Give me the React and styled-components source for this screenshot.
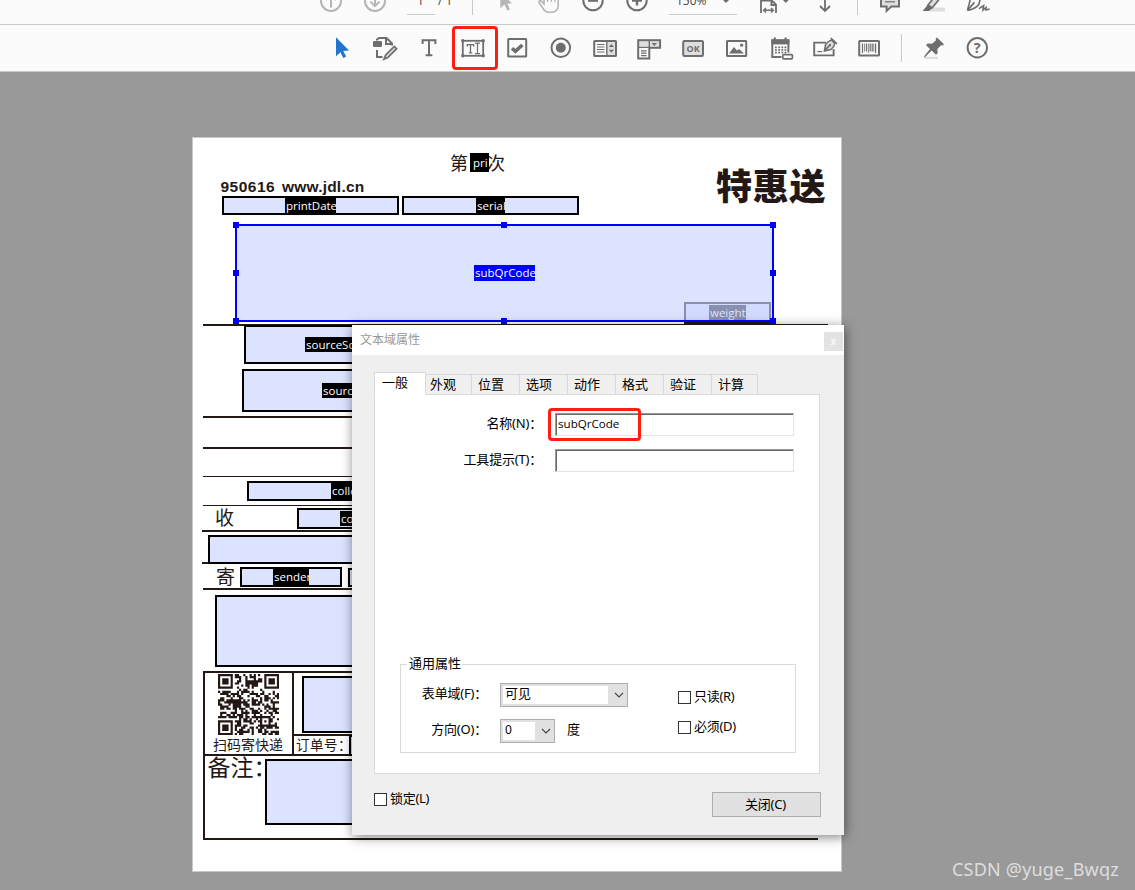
import React from 'react';
import styled, { createGlobalStyle, css } from 'styled-components';

const INK = '#6e6e6e';
const FAINT = '#b5b5b5';
const RED = '#ff1f10';
const RULE = '#231815';
const UI = "'Noto Sans', 'Noto Sans CJK SC', sans-serif";
const CJK = "'Noto Sans CJK SC', sans-serif";

const Global = createGlobalStyle`
  * { box-sizing: border-box; }
  body { margin: 0; background: #999; font-family: ${UI}; }
`;

const Window = styled.div`
  width: 1135px;
  height: 890px;
  display: flex;
  flex-direction: column;
  overflow: hidden;
  background: #999;
`;

/* ---------- toolbars ---------- */

const Bar = styled.div`
  display: flex;
  flex: none;
  background: #fbfbfb;
  border-bottom: 1px solid #c9c9c9;
`;

const NavBar = styled(Bar)`
  height: 25px;
  padding-left: 309px;
  overflow: hidden;
`;

const ToolBar = styled(Bar)`
  height: 47px;
  padding-left: 319px;
`;

const NavIcon = styled.svg`
  width: 44px;
  height: 24px;
  flex: none;
  display: block;
  margin-left: ${(p) => p.$gap || 0}px;
  fill: none;
  stroke: ${(p) => (p.$faint ? FAINT : INK)};
  stroke-width: 2;
`;

const NavBox = styled.div`
  width: ${(p) => p.$w}px;
  height: 15px;
  flex: none;
  margin-left: ${(p) => p.$gap || 0}px;
  padding-left: ${(p) => p.$pad}px;
  border-bottom: 1px solid ${(p) => (p.$plain ? 'transparent' : '#c9c9c9')};
  font-family: 'Open Sans', sans-serif;
  font-size: 12px;
  line-height: 2px;
  color: #444;
  display: flex;
  white-space: pre;
`;

const Caret = styled.svg`
  width: 8px;
  height: 6px;
  margin-left: ${(p) => p.$gap}px;
  margin-top: -1px;
  fill: ${INK};
`;

const NavRule = styled.span`
  width: 1px;
  height: 15px;
  flex: none;
  margin: 0 10px 0 ${(p) => p.$gap}px;
  background: #c9c9c9;
`;

const Tool = styled.div`
  position: relative;
  width: 44px;
  height: 46px;
  flex: none;
  display: flex;
  justify-content: center;
  padding-top: 7px;
`;

const ToolSvg = styled.svg`
  width: 32px;
  height: 32px;
  fill: none;
  stroke: ${INK};
  stroke-width: 2;
`;

const ToolMark = styled.span`
  position: absolute;
  left: 1px;
  top: 1px;
  width: 46px;
  height: 44px;
  border: 3px solid ${RED};
  border-radius: 4px;
`;

const ToolRule = styled.span`
  width: 1px;
  height: 28px;
  margin: 9px 9px 0 10px;
  background: #c9c9c9;
`;

const S = { fill: INK, stroke: 'none' };

const tools = [
  ['select', <path d="M11 5.2V24.2L15.4 20.2L18.3 26L21.2 24.6L18.2 19L24 18.6Z" fill="#2076cd" stroke="none" />],
  ['edit', <>
    <rect x="4" y="9" width="9" height="6" rx="1" {...S} />
    <path d="M8 8.5V7.5L10 6H17.5L23 11.5V13.5M17 6V12H23M8 18V25H13.5" />
    <path d="M16.6 23.2L25.3 14.4L27.6 16.7L18.8 25.5L15 27.2Z" strokeWidth="1.7" fill="#ddd" />
  </>],
  ['text', <path d="M9.6 12V8.2H22.4V12M16 8.2V23.3M12.6 23.3H19.4" strokeWidth="2" />],
  ['field', <>
    <rect x="5.8" y="8.8" width="20.4" height="15" strokeWidth="1.8" />
    <path d="M10.3 14.4V12.6H16.7V14.4M13.5 12.6V20.8M11.8 20.8H15.2" strokeWidth="1.3" />
    <path d="M18 11.2H23M20.5 11.2V21.6M18 21.6H23" strokeWidth="1.2" />
    {[[5.8, 8.8], [26.2, 8.8], [5.8, 23.8], [26.2, 23.8]].map(([x, y]) => <circle key={x + '-' + y} cx={x} cy={y} r="1.7" {...S} />)}
  </>],
  ['check', <>
    <rect x="7.2" y="7" width="18" height="17.6" rx=".6" />
    <path d="M11 16.2L14.4 19.4L21.3 13" strokeWidth="3.6" />
  </>],
  ['radio', <><circle cx="15.8" cy="15.8" r="9.3" /><circle cx="15.8" cy="15.8" r="5" {...S} /></>],
  ['list', <>
    <path d="M18 9H27V24H18Z" fill="#dedede" stroke="none" />
    <rect x="5.2" y="9" width="21.8" height="15" rx=".6" />
    <path d="M17.8 9V24" strokeWidth="1.4" />
    <path d="M8 12.5H15.5M8 15H15.5M8 17.5H15.5M8 20H15.5" strokeWidth="1.2" />
    <path d="M19.8 15L22.4 12L25 15ZM19.8 17.8H25L22.4 20.8Z" {...S} />
  </>],
  ['combo', <>
    <rect x="5.2" y="8.2" width="21.9" height="7.6" fill="#dedede" />
    <path d="M16.3 8V16" strokeWidth="1.4" />
    <path d="M18.6 11H24L21.3 14Z" {...S} />
    <path d="M5.2 16V26.5H16.3V16" fill="#fbfbfb" />
    <path d="M8 18.8H13.5M8 21.2H13.5M8 23.6H13.5" strokeWidth="1.2" />
  </>],
  ['button', <>
    <rect x="6.2" y="9" width="19.8" height="15" rx="1.2" fill="#dedede" />
    <text x="16.1" y="20" textAnchor="middle" fontFamily="'Open Sans', sans-serif" fontWeight="700" fontSize="9" {...S}>OK</text>
  </>],
  ['image', <>
    <rect x="6" y="9" width="19.2" height="15" rx=".6" />
    <path d="M8 21.6L13 15L16 18.4L18 17L23 21.6Z" {...S} />
    <circle cx="20.6" cy="13.2" r="1.6" {...S} />
  </>],
  ['date', <>
    <path d="M6.3 7.3H24.4V12.4H6.3Z" {...S} />
    <path d="M9.8 5.4V8M20.6 5.4V8" strokeWidth="2.2" />
    <path d="M16.5 25H7.3V8.5H23.4V20.5" />
    {[15.4, 18, 20.6].map((y) => [10.9, 14.1, 17.3, 20.4].map((x) => <rect key={x + '-' + y} x={x - 0.9} y={y - 0.9} width="1.8" height="1.7" {...S} />))}
    <rect x="17.8" y="22.6" width="9.6" height="4.2" rx="1" fill="#fbfbfb" strokeWidth="1.7" />
  </>],
  ['sign', <>
    <path d="M17 10.6H5.2V23.4H24.6V17" strokeWidth="1.9" />
    <path d="M8.3 19.6H13" strokeWidth="1.2" />
    <path d="M15.4 18.9L16.6 12.6Q18.6 9.2 22.4 8L25.8 11.4Q25 15.4 21.8 17.6Z" fill="#dedede" strokeWidth="1.6" />
    <path d="M15.4 18.9L21 13M21.8 6L28 11.8" strokeWidth="1.7" />
    <circle cx="21" cy="13" r="1.2" {...S} />
  </>],
  ['barcode', <>
    <rect x="6.2" y="9" width="19.8" height="14.6" rx=".6" />
    <path d="M9.5 11.6V21M13.5 11.6V19.5M17.2 11.6V19.5M19.2 11.6V19.5M22.6 11.6V21" strokeWidth="1.2" />
    <path d="M11.6 11.6V19.5M15.4 11.6V21M20.8 11.6V19.5" strokeWidth=".8" />
  </>],
];

const helpers = [
  ['pin', <>
    <path d="M7 24.8H21V27H7Z" fill="#dedede" stroke="none" />
    <path d="M20 5.4L27 12.2L25.6 13.6L24 13.2L20.4 17L20.6 21.2L19 22.8L14.6 18.6L8 25.2L7 24.6L13 17L9 13.2L10.6 11.6L15 11.8L19 8.2L18.6 6.8Z" {...S} />
  </>],
  ['help', <>
    <circle cx="16.3" cy="15.8" r="9.7" />
    <text x="16.3" y="21" textAnchor="middle" fontFamily="'Open Sans', sans-serif" fontWeight="700" fontSize="14.5" {...S}>?</text>
  </>],
];

function Navigation() {
  return (
    <NavBar>
      <NavIcon $faint><circle cx="22" cy="1" r="10" /><path d="M22 -5V7.5M17 0L22 -5L27 0" /></NavIcon>
      <NavIcon $faint><circle cx="22" cy="1" r="10" /><path d="M22 -5V6M17.4 1.6L22 6.2L26.6 1.6" /></NavIcon>
      <NavBox $w={28} $gap={10} $pad={10}>1</NavBox>
      <NavBox $w={21} $pad={3} $plain>/ 1</NavBox>
      <NavRule $gap={16} />
      <NavIcon $faint><path d="M17.3 -9V8.3L21.4 4.6L24.4 10.6L27 9.4L24.4 3.6H29Z" fill={FAINT} stroke="none" /></NavIcon>
      <NavIcon $faint><path d="M17 -6V4L14.2 1C12.5 0 11.4 1.4 12.4 3L17.4 10.4Q19 12.2 21.5 12.2H25Q30.6 12 31.2 6V-3" strokeWidth="1.6" /><path d="M20.6 -4V2M24.4 -4V2M28 -4V2" strokeWidth="1.3" /></NavIcon>
      <NavIcon><circle cx="22" cy=".6" r="9.7" /><path d="M17 .6H27" strokeWidth="2.4" /></NavIcon>
      <NavIcon><circle cx="22" cy=".6" r="9.7" /><path d="M17 .6H27M22 -5V5.6" strokeWidth="2.4" /></NavIcon>
      <NavBox $w={68} $gap={10} $pad={7}>150%<Caret $gap={15}><path d="M0 0H8L4 4Z" /></Caret></NavBox>
      <NavIcon $gap={9}>
        <path d="M15 13V-4M30 13V4.6L26 .6H15M25.4 -2V5H30" strokeWidth="1.8" />
        <path d="M17.6 10.3H27.4M20 8L17.6 10.3L20 12.6M25 8L27.4 10.3L25 12.6" strokeWidth="1.4" />
        <path d="M36 -1H43.6L39.8 3Z" fill={INK} stroke="none" />
      </NavIcon>
      <NavIcon $gap={13}><path d="M22 0V11M17 6L22 11L27 6" strokeWidth="1.8" /></NavIcon>
      <NavRule $gap={10} />
      <NavIcon><path d="M13 -4V6.4H18.6V11L23.4 6.4H31V-4Z" fill="#dedede" /><path d="M17 1.8H27" strokeWidth="1.2" /></NavIcon>
      <NavIcon><path d="M18 11.5L22 7.4H33V11.5Z" fill="#dedede" stroke="none" /><path d="M29 -3L20 8L16 5L24 -5" fill="#dedede" strokeWidth="1.7" /><path d="M10.6 11L16 4.6L20 8.4L17.4 11Z" fill={INK} stroke="none" /></NavIcon>
      <NavIcon><path d="M11.4 10.4L15 -3M11.4 10.4Q20 9 23 4L24.6 -3M11.4 10.4L18.4 2.4" strokeWidth="1.6" /><path d="M23 8.6L27.6 5.6L27 10L30 7.4V10L33.6 9" strokeWidth="1.6" /></NavIcon>
    </NavBar>
  );
}

function Tools() {
  return (
    <ToolBar>
      {tools.map(([name, art]) => (
        <Tool key={name}>
          <ToolSvg viewBox="0 0 32 32">{art}</ToolSvg>
          {name === 'field' && <ToolMark />}
        </Tool>
      ))}
      <ToolRule />
      {helpers.map(([name, art]) => (
        <Tool key={name}><ToolSvg viewBox="0 0 32 32">{art}</ToolSvg></Tool>
      ))}
    </ToolBar>
  );
}

/* ---------- form sheet: a free canvas of placed fields ---------- */

const Stage = styled.main`
  position: relative;
  flex: 1;
  padding: 65px 0 0 192px;
`;

const Sheet = styled.div`
  position: relative;
  width: 650px;
  height: 735px;
  background: #fff;
  border: 1px solid #c8c8c8;
`;

/* Canvas coordinates are measured from the window; the sheet starts at 193, 138. */
const placed = css`
  position: absolute;
  left: ${(p) => p.$x - 193}px;
  top: ${(p) => p.$y - 138}px;
`;

const Line = styled.span`
  ${placed}
  width: ${(p) => p.$w}px;
  height: ${(p) => p.$h}px;
  background: ${(p) => (p.$active ? '#0000ff' : RULE)};
`;

const Print = styled.span`
  ${placed}
  font-family: ${(p) => p.$font || CJK};
  font-size: ${(p) => p.$size}px;
  font-weight: ${(p) => p.$weight || 400};
  letter-spacing: ${(p) => p.$track || 0}px;
  line-height: 1;
  color: ${RULE};
  white-space: nowrap;
`;

const Box = styled.div`
  ${placed}
  width: ${(p) => p.$w}px;
  height: ${(p) => p.$h}px;
  background: ${(p) => (p.$muted ? '#d3daff' : '#dce3ff')};
  border: 2px solid ${(p) => (p.$active ? '#0000ff' : p.$muted ? '#8890ae' : '#000')};
`;

const Tag = styled.span`
  ${placed}
  width: ${(p) => p.$w}px;
  height: ${(p) => p.$h}px;
  padding-left: ${(p) => p.$pad || 1}px;
  overflow: hidden;
  background: ${(p) => (p.$active ? '#0000ff' : p.$muted ? '#8890ae' : '#000')};
  color: ${(p) => (p.$muted ? '#dce3ff' : '#fff')};
  font-family: 'Open Sans', sans-serif;
  font-size: 11.5px;
  line-height: ${(p) => p.$lh || p.$h}px;
  white-space: nowrap;
`;

const Handle = styled.i`
  ${placed}
  width: 6px;
  height: 6px;
  background: #0000ff;
`;

const Code = styled.svg`
  ${placed}
  width: 61px;
  height: 61px;
`;

const lines = [
  [203, 324, 625, 2], [203, 416, 620, 2], [203, 447, 620, 2], [203, 476, 620, 1], [203, 505, 620, 1],
  [202, 530, 620, 2], [202, 562, 620, 2], [203, 588, 620, 2], [203, 671, 615, 2], [292, 734, 520, 2],
  [203, 754, 615, 2], [203, 838, 615, 2], [203, 671, 2, 169], [292, 671, 2, 85],
];

const boxes = [
  [222, 196, 177, 19], [402, 196, 177, 19], [244, 325, 200, 39], [242, 369, 200, 43], [247, 481, 200, 20],
  [297, 508, 200, 21], [208, 535, 300, 29], [240, 567, 102, 20], [348, 568, 100, 19], [215, 595, 300, 72],
  [302, 676, 200, 57], [349, 735, 120, 21], [265, 759, 300, 66],
];

const tags = [
  ['pri', 470, 153, 19, 19, 19, 3], ['printDate', 285, 197, 51, 16, 17], ['serial', 476, 197, 29, 16, 17],
  ['sourceSc', 305, 337, 60, 15], ['sourceC', 322, 383, 50, 15], ['colle', 331, 482, 40, 18],
  ['con', 340, 511, 40, 15], ['sender', 273, 568, 36, 17, 18],
];

const handles = [[233, 222], [501, 222], [770, 222], [233, 270], [770, 270], [233, 318], [501, 318], [770, 318]];

const inFinder = (x, y) => (x < 8 && y < 8) || (x > 20 && y < 8) || (x < 8 && y > 20);
const ring = (x, y, cx, cy, r) => {
  const d = Math.max(Math.abs(x - cx), Math.abs(y - cy));
  return r === 3 ? d === 3 || d < 2 : d === 2 || d === 0;
};
const moduleOn = (x, y) => {
  if (inFinder(x, y)) return ring(x, y, x > 14 ? 25 : 3, y > 14 ? 25 : 3, 3) && x !== 7 && y !== 7 && x !== 21 && y !== 21;
  if (Math.abs(x - 22) < 3 && Math.abs(y - 22) < 3) return ring(x, y, 22, 22, 2);
  const n = Math.sin(x * 12.9898 + y * 78.233) * 43758.5453;
  return n - Math.floor(n) < 0.55;
};
const qr = Array.from({ length: 29 * 29 }, (_, i) => [i % 29, Math.floor(i / 29)])
  .filter(([x, y]) => moduleOn(x, y))
  .map(([x, y]) => `M${x} ${y}h1.04v1.04h-1.04z`)
  .join('');

function FormSheet() {
  return (
    <Sheet>
      {lines.map(([x, y, w, h]) => <Line key={`${x}-${y}-${w}`} $x={x} $y={y} $w={w} $h={h} />)}
      <Print $x={450} $y={153} $size={18}>第</Print>
      <Print $x={487} $y={153} $size={18}>次</Print>
      <Print $x={220.5} $y={178.5} $size={15.5} $weight={700} $track={0.5} $font="'Liberation Sans', sans-serif">950616</Print>
      <Print $x={282} $y={178.5} $size={15.5} $weight={700} $track={0.2} $font="'Liberation Sans', sans-serif">www.jdl.cn</Print>
      <Print $x={716} $y={166} $size={36} $weight={900} $track={0.8}>特惠送</Print>
      <Print $x={215} $y={507} $size={19}>收</Print>
      <Print $x={216} $y={566} $size={19}>寄</Print>
      <Print $x={213} $y={737} $size={14}>扫码寄快递</Print>
      <Print $x={296} $y={738} $size={13.5} $track={0.5}>订单号：</Print>
      <Print $x={207.5} $y={755} $size={23}>备注：</Print>
      <Code $x={218} $y={674} viewBox="0 0 29 29"><path d={qr} fill={RULE} /></Code>
      {boxes.map(([x, y, w, h]) => <Box key={`${x}-${y}`} $x={x} $y={y} $w={w} $h={h} />)}
      {tags.map(([t, x, y, w, h, lh, pad]) => <Tag key={t} $x={x} $y={y} $w={w} $h={h} $lh={lh} $pad={pad}>{t}</Tag>)}
      <Line $x={684} $y={322} $w={87} $h={2} />
      <Box $x={235} $y={224} $w={539} $h={98} $active />
      <Box $x={684} $y={302} $w={87} $h={20} $muted />
      <Tag $x={709} $y={305} $w={37} $h={15} $muted>weight</Tag>
      <Line $x={235} $y={320} $w={539} $h={2} $active />
      <Tag $x={474} $y={265} $w={61} $h={16} $active>subQrCode</Tag>
      {handles.map(([x, y]) => <Handle key={`${x}-${y}`} $x={x} $y={y} />)}
    </Sheet>
  );
}

/* ---------- properties dialog ---------- */

const Dialog = styled.section`
  position: absolute;
  left: 352px;
  top: 253px;
  width: 492px;
  height: 510px;
  background: #efefef;
  box-shadow: 1px 2px 11px rgba(0, 0, 0, 0.5);
  font-size: 13px;
  color: #000;
`;

const TitleBar = styled.header`
  height: 30px;
  padding: 0 1px 0 8px;
  display: flex;
  justify-content: space-between;
  background: #fff;
  font-size: 12px;
  line-height: 29px;
  color: #999;
`;

const Close = styled.span`
  width: 19px;
  height: 19px;
  margin-top: 7px;
  background: #e3e3e3;
  color: #f6f6f6;
  font-size: 10px;
  font-weight: 700;
  line-height: 18px;
  text-align: center;
`;

const Body = styled.div`
  padding: 17px 24px 0 22px;
`;

const Tabs = styled.div`
  display: flex;
  align-items: flex-end;
  height: 23px;
`;

const Tab = styled.div`
  position: relative;
  width: ${(p) => p.$w}px;
  height: ${(p) => (p.$on ? 23 : 21)}px;
  padding-left: ${(p) => (p.$on ? 7 : p.$pad)}px;
  line-height: ${(p) => (p.$on ? 18 : 18)}px;
  background: ${(p) => (p.$on ? '#fff' : '#f0f0f0')};
  border: 1px solid #d9d9d9;
  border-bottom-color: ${(p) => (p.$on ? '#fff' : '#d9d9d9')};
  border-left-width: ${(p) => (p.$on ? 1 : 0)}px;
  z-index: 1;
`;

const Panel = styled.div`
  height: 380px;
  margin-top: -1px;
  padding-top: 18px;
  background: #fff;
  border: 1px solid #d9d9d9;
`;

const FormRow = styled.div`
  display: flex;
  height: ${(p) => p.$h}px;
  margin-bottom: ${(p) => p.$after}px;
`;

const Label = styled.label`
  width: ${(p) => p.$w}px;
  margin-right: ${(p) => p.$gap}px;
  text-align: right;
  line-height: 21px;
  letter-spacing: -0.2px;
  white-space: nowrap;
`;

const Entry = styled.div`
  position: relative;
  width: 239px;
  height: 23px;
  padding-left: 2px;
  border: 1px solid #e3e3e3;
  border-top-color: #999;
  border-left-color: #999;
  box-shadow: inset 1px 1px 0 #696969;
  font-family: 'Open Sans', sans-serif;
  font-size: 11.6px;
  line-height: 20px;
`;

const EntryMark = styled.span`
  position: absolute;
  left: -8px;
  top: -6px;
  width: 93px;
  height: 33px;
  border: 3px solid ${RED};
  border-radius: 4px;
`;

const Group = styled.div`
  width: 396px;
  height: 89px;
  margin: 192px 0 0 25px;
  border: 1px solid #d9d9d9;
`;

const Legend = styled.div`
  width: 55px;
  height: 16px;
  margin: -9px 0 0 6px;
  padding-left: 2px;
  background: #fff;
  line-height: 15px;
  white-space: nowrap;
`;

const Columns = styled.div`
  display: flex;
  padding-top: 11px;
`;

const Column = styled.div`
  width: ${(p) => p.$w}px;
  padding-top: ${(p) => p.$top || 0}px;
`;

const Select = styled.div`
  width: ${(p) => p.$w}px;
  height: 24px;
  padding: 2px;
  display: flex;
  justify-content: space-between;
  align-items: center;
  background: #e1e1e1;
  border: 1px solid #adadad;

  span {
    width: ${(p) => p.$w - 23}px;
    height: 18px;
    padding-left: 2px;
    background: #fff;
    line-height: 15px;
    font-size: ${(p) => p.$size || 13}px;
  }

  svg {
    width: 10px;
    height: 6px;
    margin-right: 1px;
  }
`;

const Unit = styled.span`
  margin-left: 12px;
  line-height: 21px;
`;

const Check = styled.div`
  display: flex;
  gap: 3px;
  height: 13px;
  margin: ${(p) => p.$margin || 0};
  letter-spacing: -0.3px;
  line-height: 11px;
  white-space: nowrap;

  i {
    width: 13px;
    height: 13px;
    background: #fff;
    border: 1px solid #333;
  }
`;

const Footer = styled.footer`
  display: flex;
  justify-content: space-between;
  align-items: flex-start;
  padding-top: 18px;
  margin-right: -1px;
`;

const Button = styled.div`
  width: 109px;
  height: 25px;
  padding-right: 2px;
  background: #e1e1e1;
  border: 1px solid #adadad;
  line-height: 22px;
  text-align: center;
  letter-spacing: -0.2px;
`;

const tabs = [['外观', 46, 4], ['位置', 48, 6], ['选项', 48, 6], ['动作', 48, 6], ['格式', 48, 6], ['验证', 48, 6], ['计算', 46, 6]];

const Chevron = () => (
  <svg viewBox="0 0 10 6"><path d="M1 1L5 5L9 1" fill="none" stroke="#444" strokeWidth="1.1" /></svg>
);

function Properties() {
  return (
    <Dialog>
      <TitleBar>文本域属性<Close>x</Close></TitleBar>
      <Body>
        <Tabs>
          <Tab $w={52} $on>一般</Tab>
          {tabs.map(([t, w, pad]) => <Tab key={t} $w={w} $pad={pad}>{t}</Tab>)}
        </Tabs>
        <Panel>
          <FormRow $h={23} $after={13}>
            <Label $w={167} $gap={13}>名称(N)：</Label>
            <Entry>subQrCode<EntryMark /></Entry>
          </FormRow>
          <FormRow $h={23} $after={0}>
            <Label $w={167} $gap={13}>工具提示(T)：</Label>
            <Entry />
          </FormRow>
          <Group>
            <Legend>通用属性</Legend>
            <Columns>
              <Column $w={277}>
                <FormRow $h={24} $after={12}>
                  <Label $w={86} $gap={13}>表单域(F)：</Label>
                  <Select $w={128}><span>可见</span><Chevron /></Select>
                </FormRow>
                <FormRow $h={24} $after={0}>
                  <Label $w={86} $gap={13}>方向(O)：</Label>
                  <Select $w={55} $size={12}><span>0</span><Chevron /></Select>
                  <Unit>度</Unit>
                </FormRow>
              </Column>
              <Column $w={110} $top={8}>
                <Check $margin="0 0 17px"><i />只读(R)</Check>
                <Check><i />必须(D)</Check>
              </Column>
            </Columns>
          </Group>
        </Panel>
        <Footer>
          <Check $margin="1px 0 0"><i />锁定(L)</Check>
          <Button>关闭(C)</Button>
        </Footer>
      </Body>
    </Dialog>
  );
}

const Watermark = styled.div`
  position: absolute;
  left: 952px;
  top: 785px;
  font-family: 'Noto Sans', sans-serif;
  font-size: 18px;
  letter-spacing: 0.2px;
  line-height: 24px;
  color: #dedede;
  white-space: nowrap;
`;

export default function App() {
  return (
    <Window>
      <Global />
      <Navigation />
      <Tools />
      <Stage>
        <FormSheet />
        <Properties />
        <Watermark>CSDN @yuge_Bwqz</Watermark>
      </Stage>
    </Window>
  );
}
